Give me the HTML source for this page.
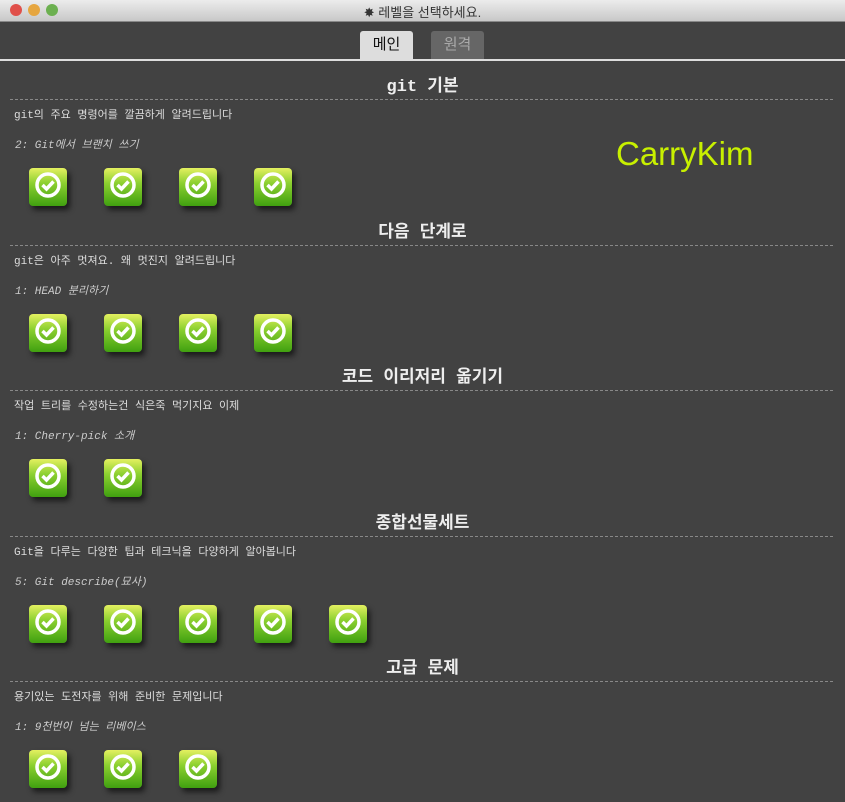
<!DOCTYPE html><html><head><meta charset="utf-8"><style>
body{margin:0;width:845px;height:802px;overflow:hidden;background:#424242;font-family:"Liberation Mono","Noto Sans CJK KR",monospace;position:relative}
.tb{position:absolute;left:0;top:0;width:845px;height:21px;background:linear-gradient(#ececec,#c8c8c8);border-bottom:1px solid #888}
.tt{position:absolute;left:0;width:845px;top:2px;text-align:center;font:13px "Liberation Sans","Noto Sans CJK KR",sans-serif;color:#333}
.dot{position:absolute;top:4px;width:12px;height:12px;border-radius:50%}
.tab{position:absolute;top:31px;height:28px;border-radius:3px 3px 0 0;font:15px "Liberation Sans","Noto Sans CJK KR",sans-serif;text-align:center;line-height:28px}
.line{position:absolute;left:0;top:59px;width:845px;height:2px;background:#ddd}
h2{position:absolute;left:0;width:845px;margin:0;text-align:center;font:bold 17px "Liberation Mono","Noto Sans CJK KR",monospace;color:#eee}
.dash{position:absolute;left:10px;width:823px;border-top:1px dashed #888}
.d{position:absolute;left:14px;font-size:11px;color:#ddd}
.l{position:absolute;left:15px;font-size:11px;font-style:italic;color:#ccc}
.ic{position:absolute;width:38px;height:38px;border-radius:4px;background:linear-gradient(#e4f060,#8cd030 40%,#40a010);box-shadow:3px 4px 6px rgba(0,0,0,.6)}
.ic svg{position:absolute;left:0;top:0}
</style></head><body>
<div class="tb"><div class="dot" style="left:10px;background:#e0504a"></div><div class="dot" style="left:28px;background:#e6a640"></div><div class="dot" style="left:46px;background:#6cb050"></div><div class="tt">✸ 레벨을 선택하세요.</div></div>
<div class="tab" style="left:360px;width:53px;background:#ddd;color:#111">메인</div>
<div class="tab" style="left:431px;width:53px;background:#666;color:#aaa">원격</div>
<div class="line"></div>
<div style="position:absolute;left:616px;top:135px;font:33px 'Liberation Sans',sans-serif;color:#c8f000">CarryKim</div>
<div id="c"></div>
<script>
var s=[["git 기본","git의 주요 명령어를 깔끔하게 알려드립니다","2: Git에서 브랜치 쓰기",4],["다음 단계로","git은 아주 멋져요. 왜 멋진지 알려드립니다","1: HEAD 분리하기",4],["코드 이리저리 옮기기","작업 트리를 수정하는건 식은죽 먹기지요 이제","1: Cherry-pick 소개",2],["종합선물세트","Git을 다루는 다양한 팁과 테크닉을 다양하게 알아봅니다","5: Git describe(묘사)",5],["고급 문제","용기있는 도전자를 위해 준비한 문제입니다","1: 9천번이 넘는 리베이스",3]];
var h="";s.forEach(function(x,i){var o=i*145.5;
h+='<h2 style="top:'+(71+o)+'px">'+x[0]+'</h2><div class="dash" style="top:'+(99+o)+'px"></div><div class="d" style="top:'+(106+o)+'px">'+x[1]+'</div><div class="l" style="top:'+(136+o)+'px">'+x[2]+'</div>';
for(var j=0;j<x[3];j++)h+='<div class="ic" style="left:'+(29+75*j)+'px;top:'+(168+o)+'px"><svg width="38" height="38"><circle cx="19" cy="17" r="11" stroke="#fff" stroke-width="3.5" fill="none"/><path d="M13.5 17l4 4 7-7.5" stroke="#fff" stroke-width="3.5" fill="none"/></svg></div>';});
document.getElementById("c").innerHTML=h;
</script></body></html>
